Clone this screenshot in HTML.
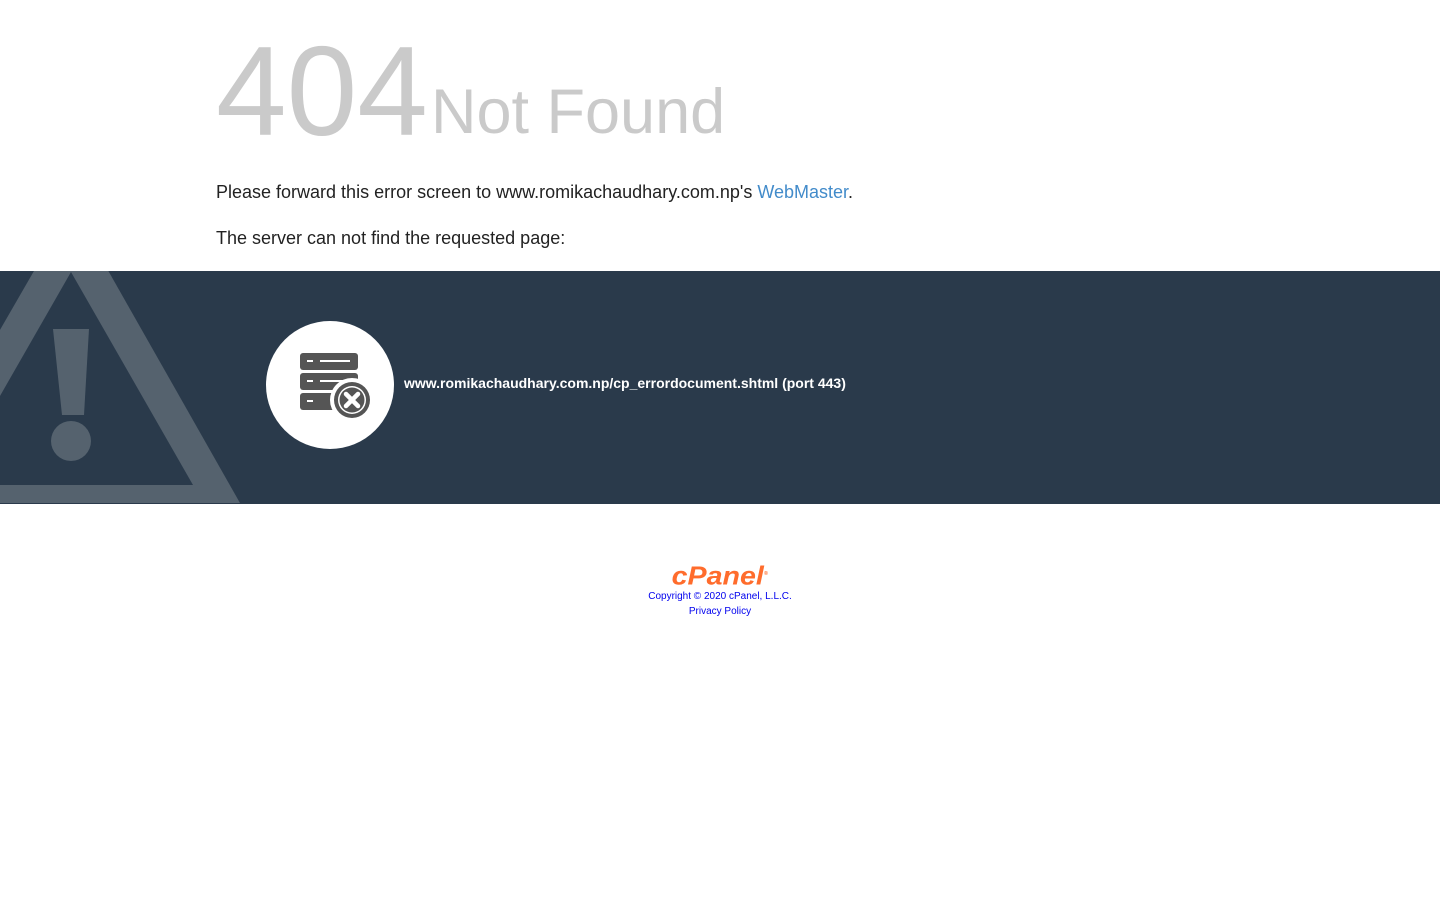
<!DOCTYPE html>
<html><head><meta charset="utf-8"><style>
body{margin:0;font-family:"Liberation Sans",Arial,sans-serif;background:#fff;}
.top{padding-left:216px;}
h1{margin:0;height:150px;position:relative;font-weight:normal;color:#ccc;}
.n{position:absolute;left:0;top:21px;font-size:127px;line-height:140px;color:#cacaca;}
.nf{position:absolute;left:215px;top:77px;font-size:63px;line-height:70px;color:#cacaca;}
p{margin:0;font-size:18px;color:#222;}
a{color:#428bca;text-decoration:none;}
.band{position:absolute;top:271px;left:0;width:1440px;height:233px;background:#2a3a4b;overflow:hidden;}
.url{position:absolute;left:404px;top:104px;color:#fff;font-weight:bold;font-size:14px;}
.foot{position:absolute;top:562px;left:0;width:1440px;text-align:center;font-size:10px;}
.foot a{color:#0000ee;}
</style></head><body>
<div class="top">
<h1><span class="n">404</span><span class="nf">Not Found</span></h1>
<p style="position:absolute;top:182px;">Please forward this error screen to www.romikachaudhary.com.np's <a href="#">WebMaster</a>.</p>
<p style="position:absolute;top:228px;">The server can not find the requested page:</p>
</div>
<div class="band">
<svg width="260" height="233" viewBox="0 271 260 233" style="position:absolute;left:0;top:0">
<polygon points="71.5,206 240,503 -100,503" fill="#55626e"/>
<polygon points="71,272 193,485 -51,485" fill="#2a3a4b"/>
<polygon points="53,329 89,329 84,415 62,415" fill="#55626e"/>
<circle cx="71" cy="441" r="20" fill="#55626e"/>
</svg>
<svg width="130" height="130" style="position:absolute;left:265px;top:49px" viewBox="0 0 130 130">
<circle cx="65" cy="65" r="64" fill="#fff"/>
<rect x="35" y="33" width="58" height="17" rx="3" fill="#555"/>
<rect x="35" y="53" width="58" height="17" rx="3" fill="#555"/>
<rect x="35" y="73" width="58" height="17" rx="3" fill="#555"/>
<rect x="42" y="40" width="6" height="2" fill="#fff"/>
<rect x="55" y="40" width="30" height="2" fill="#fff"/>
<rect x="42" y="60" width="6" height="2" fill="#fff"/>
<rect x="55" y="60" width="30" height="2" fill="#fff"/>
<rect x="42" y="80" width="6" height="2" fill="#fff"/>
<circle cx="87" cy="80" r="22" fill="#fff"/>
<circle cx="87" cy="80" r="18" fill="#555"/>
<circle cx="87" cy="80" r="14" fill="#fff"/>
<circle cx="87" cy="80" r="12.5" fill="#555"/>
<path d="M81 74 L93 86 M93 74 L81 86" stroke="#fff" stroke-width="4.5" stroke-linecap="round"/>
</svg>
<div class="url">www.romikachaudhary.com.np/cp_errordocument.shtml (port 443)</div>
</div>
<div class="foot">
<div style="font-size:26px;font-weight:bold;font-style:italic;color:#ff6c2c;line-height:24px;display:inline-block;transform:scaleX(1.1);">cPanel<sup style="font-size:5px">®</sup></div>
<div style="margin-top:3px"><a href="#">Copyright © 2020 cPanel, L.L.C.</a></div>
<div style="margin-top:4px"><a href="#">Privacy Policy</a></div>
</div>
</body></html>
